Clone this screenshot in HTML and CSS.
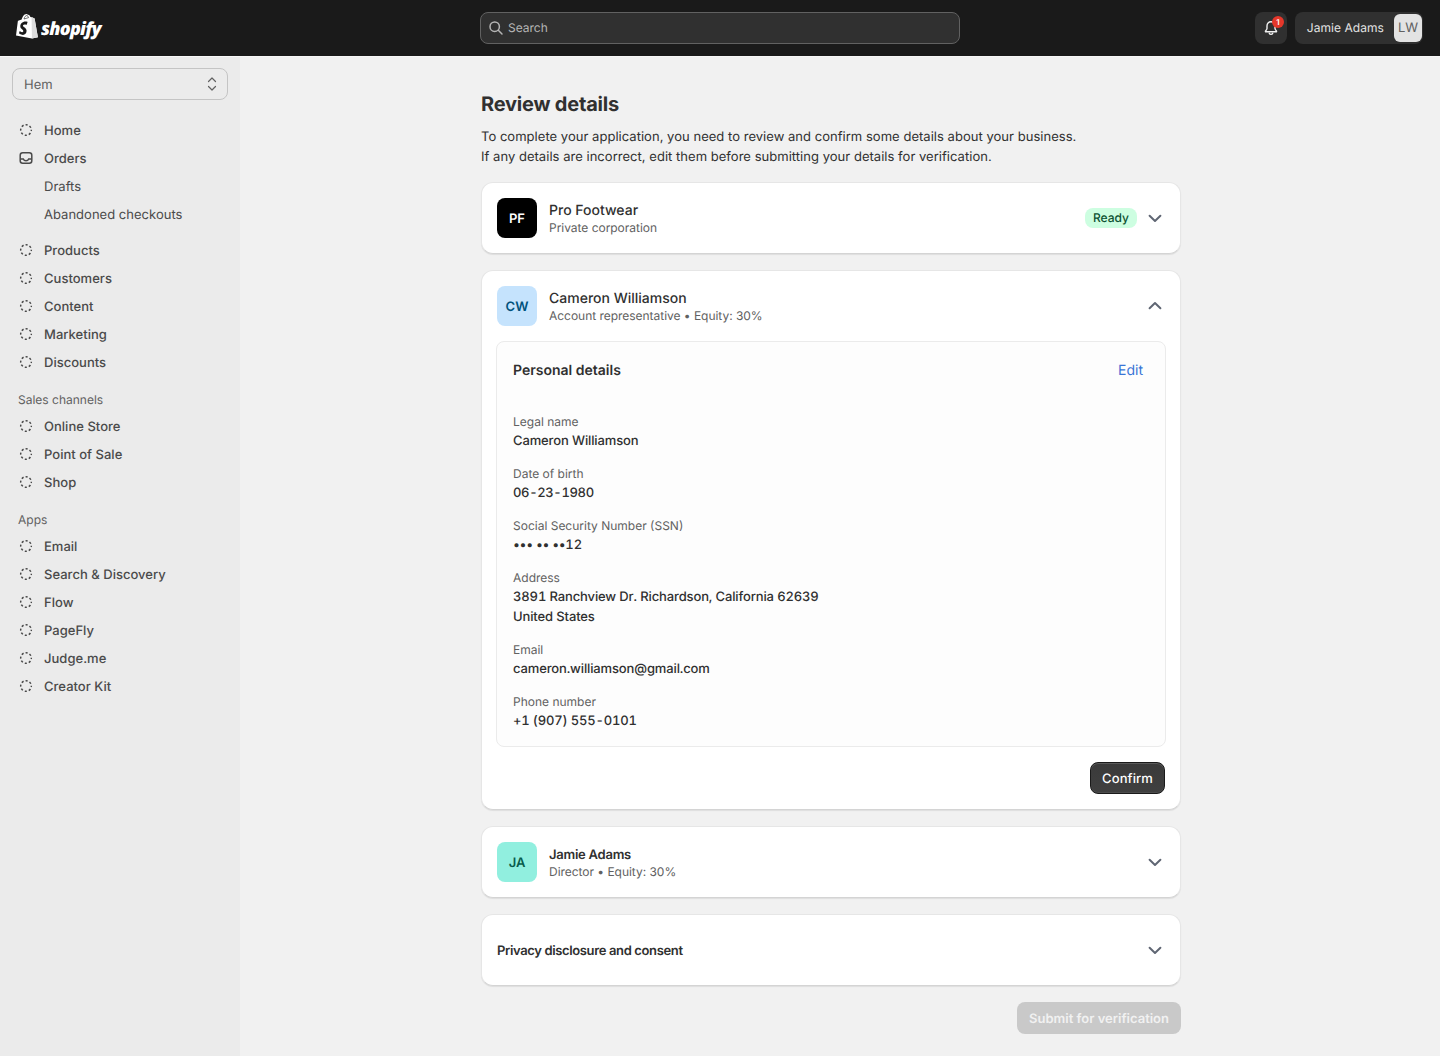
FILE: index.html
```html
<!DOCTYPE html>
<html lang="en">
<head>
<meta charset="utf-8">
<title>Review details</title>
<link rel="stylesheet" href="styles.css">
</head>
<body>
<svg class="defs" width="0" height="0" aria-hidden="true">
  <symbol id="dash" viewBox="0 0 14 14"><circle cx="7" cy="7" r="5.3" fill="none" stroke="currentColor" stroke-width="1.5" stroke-dasharray="2.1 2.06" stroke-dashoffset="1.05"/></symbol>
  <symbol id="down" viewBox="0 0 14 9"><path d="M1.6 1.8 7 7l5.4-5.2" fill="none" stroke="currentColor" stroke-width="2" stroke-linecap="round" stroke-linejoin="round"/></symbol>
  <symbol id="up" viewBox="0 0 14 9"><path d="M1.6 7.2 7 2l5.4 5.2" fill="none" stroke="currentColor" stroke-width="2" stroke-linecap="round" stroke-linejoin="round"/></symbol>
</svg>
<header class="topbar">
  <div class="brand">
    <svg class="bag" viewBox="0 0 22 25" width="22" height="25"><path d="M15.6 3.3 14.4 3c-.3-1-1-2.200-2.200-2.200h-.3C11.500.3 11 0 10.600 0 7.600 0 6.200 3.700 5.700 5.600L2.800 6.500c-.9.300-.9.300-1 1.100L0 21.600 15.900 24.600 21.900 23.300 18.600 4.500Z" fill="#fff"/><path d="M15.600 3.300 15.900 24.600 21.900 23.300 18.600 4.500 16.200 3.300Z" fill="#dcdcdc"/><path d="M11.500 8.300 10.700 10.800s-.9-.4-2-.4c-1.600 0-1.700 1-1.700 1.300 0 1.400 3.600 1.900 3.600 5.100 0 2.500-1.600 4.100-3.700 4.100-2.600 0-3.900-1.600-3.900-1.600l.7-2.300s1.300 1.200 2.500 1.200c.8 0 1.100-.6 1.100-1.100 0-1.800-3-1.900-3-4.800 0-2.500 1.800-4.900 5.400-4.900 1.200 0 1.800.4 1.800.4Z" fill="#1a1a1a"/><path d="M8 5 12.600 3.600C12.300 2.600 11.800 1.800 11 1.500 9.700 1.300 8.500 3 8 5Z" fill="none" stroke="#1a1a1a" stroke-width=".6"/></svg>
    <span class="wordmark">shopify</span>
  </div>
  <div class="search">
    <svg viewBox="0 0 16 16" width="16" height="16"><circle cx="6.700" cy="6.700" r="4.700" fill="none" stroke="currentColor" stroke-width="1.500"/><path d="m10.300 10.300 3.700 3.700" stroke="currentColor" stroke-width="1.500" stroke-linecap="round"/></svg>
    <span>Search</span>
  </div>
  <div class="top-actions">
    <div class="bell">
      <svg viewBox="0 0 16 16" width="16" height="16"><path d="M8 1.800c-2.400 0-4 1.900-4 4.200v2.500c0 .8-1 1.900-1.500 2.600-.2.300 0 .7.400.7h10.200c.4 0 .6-.4.400-.7-.5-.7-1.500-1.800-1.500-2.600V6c0-2.300-1.600-4.200-4-4.200Z" fill="none" stroke="currentColor" stroke-width="1.400"/><path d="M6.300 13.200a1.800 1.800 0 0 0 3.400 0" fill="none" stroke="currentColor" stroke-width="1.400" stroke-linecap="round"/></svg>
      <span class="badge">1</span>
    </div>
    <div class="user"><span class="user-name">Jamie Adams</span><span class="user-init">LW</span></div>
  </div>
</header>
<div class="shell">
  <aside class="sidebar">
    <div class="select"><span>Hem</span>
      <svg viewBox="0 0 10 16" width="10" height="16"><path d="M1.500 5.500 5 2l3.500 3.500M1.500 10.500 5 14l3.500-3.500" fill="none" stroke="currentColor" stroke-width="1.200" stroke-linecap="round" stroke-linejoin="round"/></svg>
    </div>
    <nav class="nav">
      <a class="item"><svg class="ico"><use href="#dash"/></svg>Home</a>
      <a class="item"><svg class="ico" viewBox="0 0 14 14"><rect x="1.200" y="1.700" width="11.600" height="10.600" rx="2.500" fill="none" stroke="currentColor" stroke-width="1.500"/><path d="M1.500 8h2.800c.5 1.200 1.400 1.800 2.700 1.800S9.200 9.200 9.700 8h2.800" fill="none" stroke="currentColor" stroke-width="1.500"/></svg>Orders</a>
      <a class="item sub">Drafts</a>
      <a class="item sub">Abandoned checkouts</a>
    </nav>
    <nav class="nav group">
      <a class="item"><svg class="ico"><use href="#dash"/></svg>Products</a>
      <a class="item"><svg class="ico"><use href="#dash"/></svg>Customers</a>
      <a class="item"><svg class="ico"><use href="#dash"/></svg>Content</a>
      <a class="item"><svg class="ico"><use href="#dash"/></svg>Marketing</a>
      <a class="item"><svg class="ico"><use href="#dash"/></svg>Discounts</a>
    </nav>
    <div class="nav-label">Sales channels</div>
    <nav class="nav">
      <a class="item"><svg class="ico"><use href="#dash"/></svg>Online Store</a>
      <a class="item"><svg class="ico"><use href="#dash"/></svg>Point of Sale</a>
      <a class="item"><svg class="ico"><use href="#dash"/></svg>Shop</a>
    </nav>
    <div class="nav-label">Apps</div>
    <nav class="nav">
      <a class="item"><svg class="ico"><use href="#dash"/></svg>Email</a>
      <a class="item"><svg class="ico"><use href="#dash"/></svg>Search &amp; Discovery</a>
      <a class="item"><svg class="ico"><use href="#dash"/></svg>Flow</a>
      <a class="item"><svg class="ico"><use href="#dash"/></svg>PageFly</a>
      <a class="item"><svg class="ico"><use href="#dash"/></svg>Judge.me</a>
      <a class="item"><svg class="ico"><use href="#dash"/></svg>Creator Kit</a>
    </nav>
  </aside>
  <main class="main">
    <h1>Review details</h1>
    <p class="intro">To complete your application, you need to review and confirm some details about your business.<br>If any details are incorrect, edit them before submitting your details for verification.</p>
    <div class="stack">
      <section class="card">
        <div class="card-head">
          <div class="avatar av-black">PF</div>
          <div class="who"><div class="who-name">Pro Footwear</div><div class="who-sub">Private corporation</div></div>
          <span class="pill">Ready</span>
          <svg class="chev"><use href="#down"/></svg>
        </div>
      </section>
      <section class="card">
        <div class="card-head">
          <div class="avatar av-blue">CW</div>
          <div class="who"><div class="who-name">Cameron Williamson</div><div class="who-sub">Account representative • Equity: 30%</div></div>
          <svg class="chev chev-up"><use href="#up"/></svg>
        </div>
        <div class="details">
          <div class="details-head"><h2>Personal details</h2><a class="edit">Edit</a></div>
          <dl class="fields">
            <div class="field"><dt>Legal name</dt><dd>Cameron Williamson</dd></div>
            <div class="field"><dt>Date of birth</dt><dd class="date">06-23-1980</dd></div>
            <div class="field"><dt>Social Security Number (SSN)</dt><dd class="secret">••• •• ••<span class="secret-end">12</span></dd></div>
            <div class="field"><dt>Address</dt><dd>3891 Ranchview Dr. Richardson, California 62639<br>United States</dd></div>
            <div class="field"><dt>Email</dt><dd>cameron.williamson@gmail.com</dd></div>
            <div class="field"><dt>Phone number</dt><dd class="phone">+1 (907) 555-0101</dd></div>
          </dl>
        </div>
        <div class="card-foot"><button class="btn-dark" type="button">Confirm</button></div>
      </section>
      <section class="card">
        <div class="card-head">
          <div class="avatar av-teal">JA</div>
          <div class="who"><div class="who-name small">Jamie Adams</div><div class="who-sub">Director • Equity: 30%</div></div>
          <svg class="chev"><use href="#down"/></svg>
        </div>
      </section>
      <section class="card">
        <div class="card-head">
          <div class="who-plain">Privacy disclosure and consent</div>
          <svg class="chev"><use href="#down"/></svg>
        </div>
      </section>
    </div>
    <div class="submit-row"><button class="btn-off" type="button">Submit for verification</button></div>
  </main>
</div>
</body>
</html>
```
FILE: styles.css
```css
* { box-sizing: border-box; }
html, body { margin: 0; height: 1056px; overflow: hidden; }
body { font-family: Inter, "Liberation Sans", sans-serif; font-size: 13px; line-height: 20px; color: #303030; background: #f1f1f1; text-rendering: geometricPrecision; }
.defs { position: absolute; }

.topbar { height: 56px; background: #1a1a1a; display: grid; grid-template-columns: 480px 480px 1fr; align-items: center; }
.brand { display: flex; align-items: center; padding-left: 16px; gap: 3px; }
.bag { display: block; margin-top: -4px; }
.wordmark { font-family: "Open Sans", sans-serif; font-style: italic; font-weight: 800; font-size: 18px; letter-spacing: -.75px; color: #fff; line-height: 24px; margin-top: 1px; }
.search { height: 32px; display: flex; align-items: center; gap: 4px; padding: 0 7px; color: #b5b5b5; background: #303030; border: 1px solid #616161; border-radius: 8px; font-size: 12px; }
.top-actions { display: flex; justify-content: flex-end; gap: 8px; padding-right: 17px; }
.bell { position: relative; width: 32px; height: 32px; border-radius: 8px; background: #303030; color: #f1f1f1; display: flex; align-items: center; justify-content: center; }
.badge { position: absolute; top: 4px; left: 17px; width: 12px; height: 12px; border-radius: 50%; background: #e5372a; color: #fff; font-size: 8px; font-weight: 600; line-height: 12px; text-align: center; }
.user { height: 32px; display: flex; align-items: center; gap: 10px; padding: 2px 1px 2px 12px; border-radius: 8px; background: #303030; color: #e3e3e3; font-size: 12px; }
.user-name { line-height: 20px; letter-spacing: .05px; }
.user-init { width: 28px; height: 28px; border-radius: 6px; background: #e3e3e3; color: #616161; display: flex; align-items: center; justify-content: center; font-size: 13px; }

.shell { display: flex; height: 1000px; border-top: 1px solid #f7f7f7; }
.sidebar { width: 240px; flex: none; background: #ebebeb; padding: 11px 12px 0; }
.select { height: 32px; display: flex; align-items: center; justify-content: space-between; padding: 2px 10px 0 11px; border: 1px solid #c4c4c4; border-radius: 8px; color: #616161; }
.select svg { margin-top: -2px; }
.nav { display: flex; flex-direction: column; }
.select + .nav { margin-top: 16px; }
.nav.group { margin-top: 8px; }
.item { height: 28px; display: flex; align-items: center; gap: 11px; padding: 2px 0 0 7px; color: #4a4a4a; font-weight: 450; white-space: nowrap; letter-spacing: .02px; }
.item.sub { padding-left: 32px; font-weight: 400; }
.ico { width: 14px; height: 14px; flex: none; color: #4a4a4a; margin-top: -2px; }
.nav-label { height: 20px; margin: 14px 0 2px; padding-left: 6px; font-size: 12px; color: #616161; }

.main { flex: 1; padding: 34px 0 0 241px; overflow: hidden; }
h1 { margin: 0; font-size: 20px; line-height: 26px; font-weight: 650; color: #303030; letter-spacing: -.2px; }
.intro { margin: 10px 0 15px; width: 700px; color: #303030; line-height: 20px; letter-spacing: .03px; }
.stack { width: 700px; display: flex; flex-direction: column; gap: 16px; }
.card { background: #fff; border: 1px solid #e6e6e6; border-bottom-color: #d4d4d4; border-radius: 12px; box-shadow: 0 1px 1px rgba(0,0,0,.08); }
.card-head { height: 70px; display: flex; align-items: center; padding: 0 15px; gap: 12px; }
.avatar { width: 40px; height: 40px; flex: none; border-radius: 8px; display: flex; align-items: center; justify-content: center; padding-top: 2px; font-size: 13px; font-weight: 600; }
.av-black { background: #000; color: #fff; }
.av-blue { background: #c5e3fd; color: #00527c; }
.av-teal { background: #91efdf; color: #085c4c; }
.who { flex: 1; min-width: 0; padding-top: 2px; }
.who-name { font-size: 14px; font-weight: 550; line-height: 20px; margin-bottom: -2px; color: #303030; }
.who-name.small { font-size: 13px; font-weight: 600; letter-spacing: -.25px; }
.who-sub { font-size: 12px; line-height: 18px; color: #616161; letter-spacing: -.03px; }
.who-plain { flex: 1; padding-top: 2px; font-size: 13px; font-weight: 600; line-height: 20px; color: #303030; letter-spacing: -.36px; }
.pill { height: 20px; padding: 0 8px; border-radius: 8px; background: #cdfee1; color: #0c5132; font-size: 12px; font-weight: 500; line-height: 20px; margin-right: -1px; }
.chev { width: 14px; height: 9px; flex: none; color: #5f6673; margin-right: 3px; }
.chev-up { margin-top: -2px; }
.details { margin: 0 14px; height: 406px; background: #fdfdfd; border: 1px solid #ebebeb; border-radius: 8px; padding: 19px 16px 0; }
.details-head { display: flex; justify-content: space-between; align-items: center; padding-right: 6px; height: 20px; }
h2 { margin: 0; font-size: 14px; font-weight: 600; line-height: 20px; color: #303030; }
.edit { color: #3a75d6; font-size: 14px; }
.fields { margin: 33px 0 0; display: flex; flex-direction: column; gap: 15px; }
dt { font-size: 12px; line-height: 16px; margin-bottom: 1px; color: #616161; }
dd { margin: 0; font-weight: 500; line-height: 20px; color: #303030; font-variant-numeric: tabular-nums; letter-spacing: -.13px; }
dd.date { letter-spacing: -.35px; }
dd.phone { letter-spacing: -.17px; }
dd.secret { letter-spacing: -.35px; }
.secret-end { letter-spacing: 0; }
.card-foot { display: flex; justify-content: flex-end; padding: 15px 15px 15px; }
.btn-dark { height: 32px; padding: 2px 11px 0; border-radius: 8px; border: 1px solid #1a1a1a; background: linear-gradient(#3a3a3a, #404040); box-shadow: inset 0 1px 0 #5a5a5a, inset 0 -1px 0 #4c4c4c; color: #fff; font: 550 13px/20px Inter, sans-serif; letter-spacing: .1px; text-rendering: geometricPrecision; }
.submit-row { width: 700px; margin-top: 16px; display: flex; justify-content: flex-end; }
.btn-off { height: 32px; padding: 2px 12px 0; border: 0; border-radius: 8px; background: #c9c9c9; color: #f1f1f1; font: 600 13px/20px Inter, sans-serif; text-rendering: geometricPrecision; }
```
